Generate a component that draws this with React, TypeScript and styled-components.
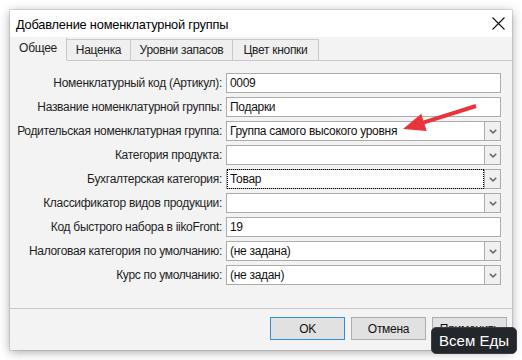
import styled, { createGlobalStyle } from "styled-components";

const GlobalStyle = createGlobalStyle`
  html, body {
    margin: 0;
    background: #ffffff;
  }
  body {
    font-family: "Liberation Sans", Arial, sans-serif;
    letter-spacing: -0.3px;
    color: #1b1b1b;
  }
`;

const Page = styled.div`
  position: relative;
  width: 522px;
  height: 360px;
  padding: 10px;
  box-sizing: border-box;
`;

const Dialog = styled.div`
  width: 502px;
  height: 340px;
  display: flex;
  flex-direction: column;
  background: #f3f3f3;
  box-shadow: 0 0 0 1px rgba(0, 0, 0, 0.1), 0 2px 10px rgba(0, 0, 0, 0.35);
`;

const TitleBar = styled.div`
  height: 27px;
  display: flex;
  align-items: center;
  justify-content: space-between;
  padding: 0 7px 0 6px;
  background: #ffffff;
`;

const Title = styled.div`
  font-size: 12.8px;
  letter-spacing: -0.2px;
  color: #000;
  padding-top: 1px;
`;

const TabStrip = styled.div`
  height: 24px;
  box-sizing: border-box;
  display: flex;
  align-items: flex-end;
  border-bottom: 1px solid #c9c9c9;
`;

const Tab = styled.div<{ $active?: boolean; $w: number }>`
  width: ${({ $w }) => $w}px;
  height: ${({ $active }) => ($active ? 24 : 22)}px;
  margin-bottom: -1px;
  box-sizing: border-box;
  display: flex;
  align-items: center;
  justify-content: center;
  font-size: 12px;
  color: #222;
  background: ${({ $active }) => ($active ? "#f3f3f3" : "#efefef")};
  border: 1px solid #c9c9c9;
  border-left: none;
  border-top-color: ${({ $active }) => ($active ? "transparent" : "#c9c9c9")};
  border-bottom-color: ${({ $active }) => ($active ? "#f3f3f3" : "#c9c9c9")};
  padding-bottom: ${({ $active }) => ($active ? 2 : 0)}px;
`;

const Panel = styled.div`
  flex: 1;
  display: flex;
  flex-direction: column;
  gap: 4px;
  padding-top: 12px;
`;

const Row = styled.div`
  display: grid;
  grid-template-columns: 216px 275px;
  height: 20px;
  align-items: center;
`;

const Label = styled.div`
  font-size: 12px;
  text-align: right;
  padding-right: 4px;
  white-space: nowrap;
  color: #1e1e1e;
`;

const Field = styled.div`
  height: 20px;
  box-sizing: border-box;
  display: flex;
  align-items: stretch;
  background: #ffffff;
  border: 1px solid #acacac;
`;

const Value = styled.div<{ $focused?: boolean }>`
  flex: 1;
  display: flex;
  align-items: center;
  font-size: 12px;
  padding-left: 3px;
  color: #111;
  white-space: nowrap;
  ${({ $focused }) =>
    $focused &&
    `
    margin: 0 1px;
    padding-left: 2px;
    outline: 1px dotted #000;
  `}
`;

const DropButton = styled.div`
  width: 15px;
  display: flex;
  align-items: center;
  justify-content: center;
  background: #f0f0f0;
  border-left: 1px solid #acacac;
`;

const Footer = styled.div`
  height: 42px;
  box-sizing: border-box;
  border-top: 1px solid #c9c9c9;
  display: flex;
  justify-content: flex-end;
  gap: 6px;
  padding: 8px 5px 0 0;
`;

const Button = styled.div<{ $primary?: boolean }>`
  width: 75px;
  height: 23px;
  box-sizing: border-box;
  display: flex;
  align-items: center;
  justify-content: center;
  font-size: 12px;
  color: #111;
  background: #e1e1e1;
  border: 1px solid ${({ $primary }) => ($primary ? "#2d8fe0" : "#adadad")};
`;

const Watermark = styled.div`
  position: absolute;
  left: 431px;
  top: 327px;
  width: 86px;
  height: 27px;
  box-sizing: border-box;
  border-radius: 5px;
  background: #23272c;
  border: 1px solid #3b4046;
  color: #ffffff;
  font-family: "Liberation Sans", Arial, sans-serif;
  font-size: 15px;
  letter-spacing: 0;
  display: flex;
  align-items: center;
  justify-content: center;
`;

const Overlay = styled.svg`
  position: absolute;
  left: 0;
  top: 0;
  pointer-events: none;
`;

const Chevron = () => (
  <svg width="8" height="5" viewBox="0 0 8 5">
    <polyline points="0.8,0.8 4,3.8 7.2,0.8" fill="none" stroke="#6f6f6f" strokeWidth="1.6" />
  </svg>
);

const CloseIcon = () => (
  <svg width="13" height="13" viewBox="0 0 13 13">
    <path d="M0.5 0.5 L12.5 12.5 M12.5 0.5 L0.5 12.5" stroke="#111" strokeWidth="1.1" />
  </svg>
);

type FieldRow = { label: string; value: string; combo?: boolean; focused?: boolean };

const rows: FieldRow[] = [
  { label: "Номенклатурный код (Артикул):", value: "0009" },
  { label: "Название номенклатурной группы:", value: "Подарки" },
  { label: "Родительская номенклатурная группа:", value: "Группа самого высокого уровня", combo: true },
  { label: "Категория продукта:", value: "", combo: true },
  { label: "Бухгалтерская категория:", value: "Товар", combo: true, focused: true },
  { label: "Классификатор видов продукции:", value: "", combo: true },
  { label: "Код быстрого набора в iikoFront:", value: "19" },
  { label: "Налоговая категория по умолчанию:", value: "(не задана)", combo: true },
  { label: "Курс по умолчанию:", value: "(не задан)", combo: true },
];

const tabs = [
  { title: "Общее", w: 57 },
  { title: "Наценка", w: 64 },
  { title: "Уровни запасов", w: 102 },
  { title: "Цвет кнопки", w: 86 },
];

export default function App() {
  return (
    <Page>
      <GlobalStyle />
      <Dialog>
        <TitleBar>
          <Title>Добавление номенклатурной группы</Title>
          <CloseIcon />
        </TitleBar>
        <TabStrip>
          {tabs.map((t, i) => (
            <Tab key={t.title} $active={i === 0} $w={t.w}>
              {t.title}
            </Tab>
          ))}
        </TabStrip>
        <Panel>
          {rows.map((r) => (
            <Row key={r.label}>
              <Label>{r.label}</Label>
              <Field>
                <Value $focused={r.focused}>{r.value}</Value>
                {r.combo && (
                  <DropButton>
                    <Chevron />
                  </DropButton>
                )}
              </Field>
            </Row>
          ))}
        </Panel>
        <Footer>
          <Button $primary>OK</Button>
          <Button>Отмена</Button>
          <Button>Применить</Button>
        </Footer>
      </Dialog>
      <Overlay width="522" height="360" viewBox="0 0 522 360">
        <polygon
          points="403,129 426.7,131 424.6,124.3 476.6,107.9 475.4,104.1 423.4,120.5 421.3,113.8"
          fill="#e8353b"
        />
      </Overlay>
      <Watermark>Всем Еды</Watermark>
    </Page>
  );
}
